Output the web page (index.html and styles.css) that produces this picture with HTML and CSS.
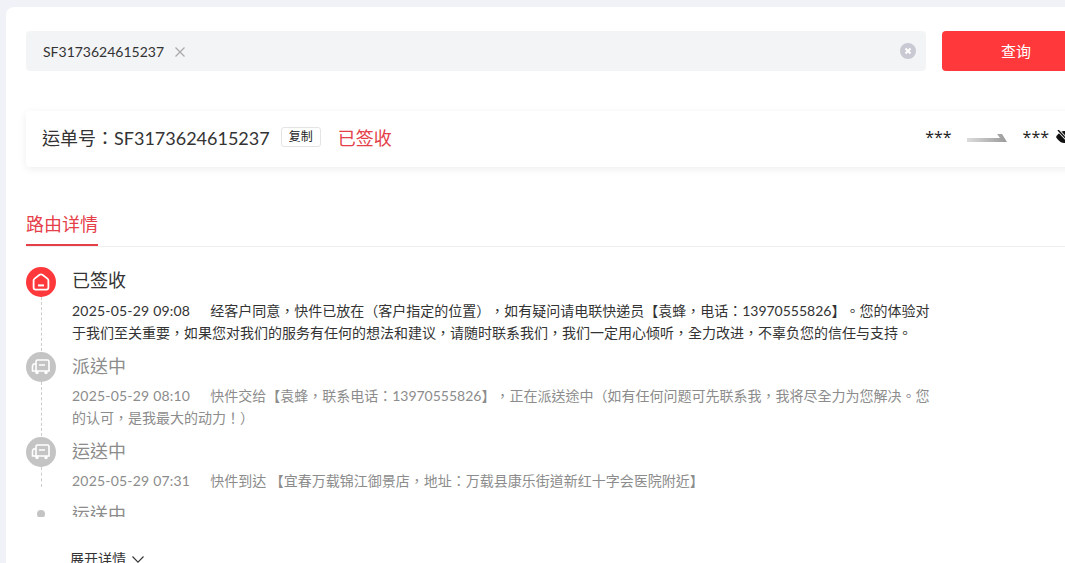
FILE: index.html
```html
<!DOCTYPE html>
<html lang="zh-TW">
<head>
  <meta charset="UTF-8">
  <meta name="viewport" content="width=device-width, initial-scale=1.0">
  <title>运单查询</title>
  <link rel="stylesheet" href="styles.css">
</head>
<body>
  <div class="page">
    <div class="search-row">
      <div class="search-box">
        <span class="tag">SF3173624615237</span>
        <svg class="tag-close" width="10" height="10" viewBox="0 0 10 10"><path d="M0.5 0.5 9.5 9.5M9.5 0.5 0.5 9.5" stroke="#a8a8a8" stroke-width="1.2" fill="none"/></svg>
        <svg class="clear-all" width="16" height="16" viewBox="0 0 16 16"><circle cx="8" cy="8" r="8" fill="#c8c9d2"/><path d="M5.5 5.5 10.5 10.5M10.5 5.5 5.5 10.5" stroke="#fff" stroke-width="2" fill="none"/></svg>
      </div>
      <button class="search-btn">查询</button>
    </div>

    <div class="waybill">
      <div class="waybill-left">
        <span class="waybill-no">运单号：SF3173624615237</span>
        <button class="copy-btn">复制</button>
        <span class="waybill-status">已签收</span>
      </div>
      <div class="route">
        <span class="city">***</span>
        <svg class="route-arrow" width="40" height="8" viewBox="0 0 40 8">
          <defs>
            <linearGradient id="arrowFill" x1="0" y1="0" x2="1" y2="0">
              <stop offset="0" stop-color="#dcdcdc"/>
              <stop offset="1" stop-color="#9a9a9a"/>
            </linearGradient>
          </defs>
          <path d="M0 4H33L30 0H35L40 8H0Z" fill="url(#arrowFill)"/>
        </svg>
        <span class="city">***</span>
        <svg class="eye" width="18" height="14" viewBox="0 0 18 14">
          <path d="M0 7C3 2 6 1 9 1s6 1 9 6c-3 5-6 6-9 6S3 12 0 7Z" fill="#111"/>
          <path d="M2 0 15 14" stroke="#fff" stroke-width="3" fill="none"/>
          <path d="M2 0 15 14" stroke="#111" stroke-width="1.4" fill="none"/>
        </svg>
      </div>
    </div>

    <div class="tabs">
      <div class="tab">路由详情</div>
    </div>

    <div class="timeline">
      <div class="step step-done">
        <div class="axis">
          <span class="node node-red">
            <svg width="20" height="20" viewBox="0 0 20 20"><path d="M2.6 8.6Q2.6 7.4 3.6 6.6L8.6 2.8Q10 1.8 11.4 2.8L16.4 6.6Q17.4 7.4 17.4 8.6V15.5Q17.4 17.6 15.3 17.6H4.7Q2.6 17.6 2.6 15.5Z" fill="none" stroke="#fff" stroke-width="1.8"/><path d="M7 13.4H13" stroke="#fff" stroke-width="2" fill="none"/></svg>
          </span>
          <span class="axis-line"></span>
        </div>
        <div class="step-body">
          <div class="step-title">已签收</div>
          <p class="step-text"><span class="step-time">2025-05-29 09:08</span>经客户同意，快件已放在（客户指定的位置），如有疑问请电联快递员【袁蜂，电话：13970555826】。您的体验对于我们至关重要，如果您对我们的服务有任何的想法和建议，请随时联系我们，我们一定用心倾听，全力改进，不辜负您的信任与支持。</p>
        </div>
      </div>

      <div class="step">
        <div class="axis">
          <span class="node node-grey">
            <svg width="20" height="18" viewBox="0 0 20 18"><path d="M5 3.5A1.5 1.5 0 0 1 6.5 2h10A1.5 1.5 0 0 1 18 3.5V13H5Z" fill="none" stroke="#fff" stroke-width="1.6"/><path d="M5 6H2.5L1.5 8v5H5M8 7h6" fill="none" stroke="#fff" stroke-width="1.6"/><circle cx="6" cy="14.5" r="1.7" fill="#fff"/><circle cx="15" cy="14.5" r="1.7" fill="#fff"/></svg>
          </span>
          <span class="axis-line"></span>
        </div>
        <div class="step-body">
          <div class="step-title">派送中</div>
          <p class="step-text"><span class="step-time">2025-05-29 08:10</span>快件交给【袁蜂，联系电话：13970555826】，正在派送途中（如有任何问题可先联系我，我将尽全力为您解决。您的认可，是我最大的动力！）</p>
        </div>
      </div>

      <div class="step">
        <div class="axis">
          <span class="node node-grey">
            <svg width="20" height="18" viewBox="0 0 20 18"><path d="M5 3.5A1.5 1.5 0 0 1 6.5 2h10A1.5 1.5 0 0 1 18 3.5V13H5Z" fill="none" stroke="#fff" stroke-width="1.6"/><path d="M5 6H2.5L1.5 8v5H5M8 7h6" fill="none" stroke="#fff" stroke-width="1.6"/><circle cx="6" cy="14.5" r="1.7" fill="#fff"/><circle cx="15" cy="14.5" r="1.7" fill="#fff"/></svg>
          </span>
          <span class="axis-line axis-line-short"></span>
        </div>
        <div class="step-body">
          <div class="step-title">运送中</div>
          <p class="step-text"><span class="step-time">2025-05-29 07:31</span>快件到达 【宜春万载锦江御景店，地址：万载县康乐街道新红十字会医院附近】</p>
        </div>
      </div>

      <div class="step">
        <div class="axis">
          <span class="node-dot"></span>
        </div>
        <div class="step-body">
          <div class="step-title">运送中</div>
        </div>
      </div>
    </div>

    <div class="expand">
      展开详情
      <svg width="12" height="7" viewBox="0 0 12 7"><path d="M0.5 0.5 6 6.2 11.5 0.5" fill="none" stroke="#333" stroke-width="1.1"/></svg>
    </div>
  </div>
</body>
</html>
```

FILE: styles.css
```css
html, body {
  height: 100%;
  overflow: hidden;
}

body {
  margin: 0;
  padding: 7px 0 0 6px;
  box-sizing: border-box;
  background-color: #f0f2f7;
  color: #333;
  font-family: Lato, "Noto Sans CJK TC", sans-serif;
  font-size: 14px;
  text-spacing-trim: space-all;
}

.page {
  width: 1066px;
  min-height: 600px;
  padding: 24px 20px 0;
  background-color: #fff;
  border-radius: 8px 0 0 0;
}

.search-row {
  display: flex;
  gap: 16px;
}

.search-box {
  flex: 1;
  display: flex;
  align-items: center;
  height: 40px;
  padding: 1px 10px 0 17px;
  box-sizing: border-box;
  background-color: #f3f4f6;
  border-radius: 4px;
}

.tag {
  color: #333;
}

.tag-close {
  margin-left: 11px;
}

.clear-all {
  margin-left: auto;
  margin-top: -1px;
}

.search-btn {
  width: 150px;
  height: 40px;
  padding: 0 2px 2px 0;
  border: none;
  border-radius: 4px;
  background-color: #ff383c;
  color: #fff;
  font-family: inherit;
  font-size: 15px;
}

.waybill {
  display: flex;
  justify-content: space-between;
  align-items: center;
  height: 56px;
  margin-top: 40px;
  padding: 0 18px 4px 16px;
  box-sizing: border-box;
  border-radius: 4px;
  box-shadow: 0 2px 8px rgba(0, 0, 0, 0.07);
}

.waybill-left {
  display: flex;
  align-items: center;
}

.waybill-no {
  font-size: 18px;
}

.copy-btn {
  width: 40px;
  height: 20px;
  margin-left: 11px;
  padding: 0;
  border: 1px solid #e4e4e4;
  border-radius: 3px;
  background-color: #fff;
  color: #222;
  font-family: inherit;
  font-size: 12px;
  line-height: 18px;
}

.waybill-status {
  margin-left: 17px;
  font-size: 18px;
  color: #e5404a;
}

.route {
  display: flex;
  align-items: center;
}

.city {
  color: #222;
  font-family: "Open Sans", sans-serif;
  font-size: 16px;
}

.route-arrow {
  margin: 2px 16px 0 15px;
}

.eye {
  margin-left: 7px;
}

.tabs {
  margin-top: 40px;
  border-bottom: 1px solid #eee;
}

.tab {
  display: inline-block;
  vertical-align: top;
  height: 37px;
  line-height: 35px;
  font-size: 18px;
  color: #e5404a;
  border-bottom: 2px solid #e5404a;
}

.timeline {
  height: 270px;
  padding-top: 19px;
  box-sizing: border-box;
  overflow: hidden;
}

.step {
  display: flex;
  gap: 16px;
}

.axis {
  flex: none;
  width: 30px;
  display: flex;
  flex-direction: column;
  align-items: center;
  padding-top: 1px;
}

.node {
  flex: none;
  display: flex;
  align-items: center;
  justify-content: center;
  width: 30px;
  height: 30px;
  border-radius: 50%;
}

.node-red {
  background-color: #ff383c;
}

.node-grey {
  background-color: #c4c4c4;
}

.node-dot {
  width: 8px;
  height: 8px;
  margin-top: 10px;
  border-radius: 50%;
  background-color: #c4c4c4;
}

.axis-line {
  flex: 1;
  border-left: 1px dashed #ccc;
}

.axis-line-short {
  margin-bottom: 12px;
}

.step-body {
  width: 860px;
  padding-bottom: 7px;
  color: #8c8c8c;
}

.step-title {
  font-size: 18px;
  line-height: 30px;
  margin-bottom: 4px;
}

.step-text {
  margin: 0;
  line-height: 22px;
}

.step-time {
  margin-right: 20px;
  letter-spacing: 0.2px;
}

.step-done .step-body {
  color: #333;
}

.step-done .step-title {
  line-height: 28px;
  margin-bottom: 6px;
}

.expand {
  display: flex;
  align-items: center;
  gap: 6px;
  margin-top: 31px;
  padding-left: 44px;
  line-height: 22px;
  color: #333;
}
```
